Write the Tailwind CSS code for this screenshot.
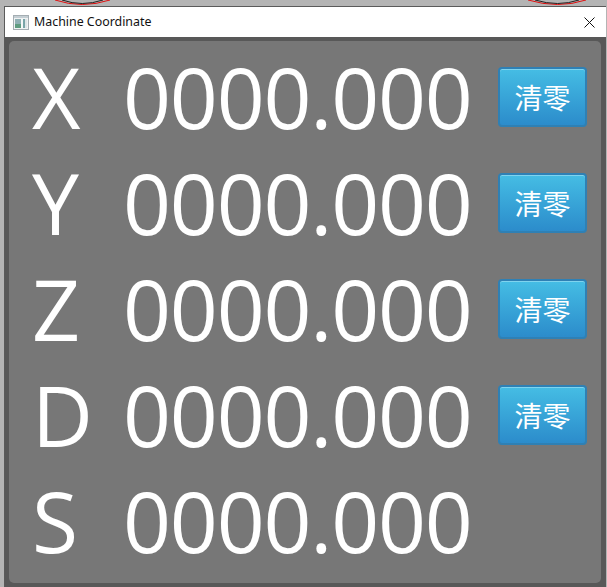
<!DOCTYPE html>
<html lang="en">
<head>
<meta charset="UTF-8">
<title>Machine Coordinate</title>
<script src="https://cdn.jsdelivr.net/npm/@tailwindcss/browser@4"></script>
</head>
<body class="w-[607px] h-[587px] overflow-hidden bg-[#b4b4b4] font-['Open_Sans',sans-serif]">
  <div class="relative h-[587px] pt-[6px] pl-[4px] pr-[1px]">
    <!-- bit of the red arcs behind the window -->
    <svg class="absolute left-0 top-0" width="607" height="7" fill="none">
      <path d="M55 0 Q82 9 110 0" stroke="#e01010"/>
      <path d="M62 0 Q82 7 103 0" stroke="#222"/>
      <path d="M528 0 Q558 9 586 0" stroke="#e01010"/>
      <path d="M535 0 Q558 7 579 0" stroke="#222"/>
    </svg>
    <div class="relative h-[581px] flex flex-col border-t border-l border-[#5a5a5a] bg-[#585858]">
      <!-- title bar -->
      <div class="h-[30px] flex items-center bg-white pl-[8px] pr-[11px] shrink-0">
        <svg width="16" height="15" viewBox="0 0 16 15">
          <rect x="0.5" y="0.5" width="15" height="14" fill="#f0f2f3" stroke="#a4adb2"/>
          <rect x="1" y="1" width="14" height="2" fill="#c4ced3"/>
          <rect x="2" y="4" width="6" height="9" fill="#8fb0b4"/>
          <rect x="2" y="9" width="6" height="4" fill="#5f9c80"/>
          <rect x="8" y="4" width="2" height="9" fill="#f4f7f7"/>
          <rect x="10" y="4" width="2" height="9" fill="#78a4a8"/>
          <rect x="12" y="4" width="2" height="9" fill="#dce4e6"/>
        </svg>
        <span class="ml-[5px] text-[12.4px] leading-none text-[#111] font-['Noto_Sans',sans-serif]">Machine Coordinate</span>
        <svg class="ml-auto" width="11" height="11" viewBox="0 0 11 11" stroke="#111" fill="none">
          <path d="M0.5 0.5 L10.5 10.5 M10.5 0.5 L0.5 10.5"/>
        </svg>
      </div>
      <!-- panel -->
      <div class="mt-[4px] ml-[4px] mr-[5px] h-[542px] rounded-[5px] bg-[#777777] pt-[3px] text-white flex flex-col">
        <div class="h-[106px] flex items-center">
          <span class="w-[114px] pl-[23px] text-[84px] leading-none">X</span>
          <span class="w-[375px] text-[84px] leading-none tracking-[-1.2px]">0000.000</span>
          <button class="w-[89px] h-[60px] rounded-[4px] border-2 border-[#2f80b4] shadow-[inset_0_1px_0_#7fd3ee] bg-gradient-to-b from-[#45bde4] to-[#2c8ccb] text-[28px] text-white font-['Noto_Sans_CJK_SC',sans-serif]">清零</button>
        </div>
        <div class="h-[106px] flex items-center">
          <span class="w-[114px] pl-[23px] text-[84px] leading-none">Y</span>
          <span class="w-[375px] text-[84px] leading-none tracking-[-1.2px]">0000.000</span>
          <button class="w-[89px] h-[60px] rounded-[4px] border-2 border-[#2f80b4] shadow-[inset_0_1px_0_#7fd3ee] bg-gradient-to-b from-[#45bde4] to-[#2c8ccb] text-[28px] text-white font-['Noto_Sans_CJK_SC',sans-serif]">清零</button>
        </div>
        <div class="h-[106px] flex items-center">
          <span class="w-[114px] pl-[23px] text-[84px] leading-none">Z</span>
          <span class="w-[375px] text-[84px] leading-none tracking-[-1.2px]">0000.000</span>
          <button class="w-[89px] h-[60px] rounded-[4px] border-2 border-[#2f80b4] shadow-[inset_0_1px_0_#7fd3ee] bg-gradient-to-b from-[#45bde4] to-[#2c8ccb] text-[28px] text-white font-['Noto_Sans_CJK_SC',sans-serif]">清零</button>
        </div>
        <div class="h-[106px] flex items-center">
          <span class="w-[114px] pl-[23px] text-[84px] leading-none">D</span>
          <span class="w-[375px] text-[84px] leading-none tracking-[-1.2px]">0000.000</span>
          <button class="w-[89px] h-[60px] rounded-[4px] border-2 border-[#2f80b4] shadow-[inset_0_1px_0_#7fd3ee] bg-gradient-to-b from-[#45bde4] to-[#2c8ccb] text-[28px] text-white font-['Noto_Sans_CJK_SC',sans-serif]">清零</button>
        </div>
        <div class="h-[106px] flex items-center">
          <span class="w-[114px] pl-[23px] text-[84px] leading-none">S</span>
          <span class="w-[375px] text-[84px] leading-none tracking-[-1.2px]">0000.000</span>
        </div>
      </div>
    </div>
  </div>
</body>
</html>
